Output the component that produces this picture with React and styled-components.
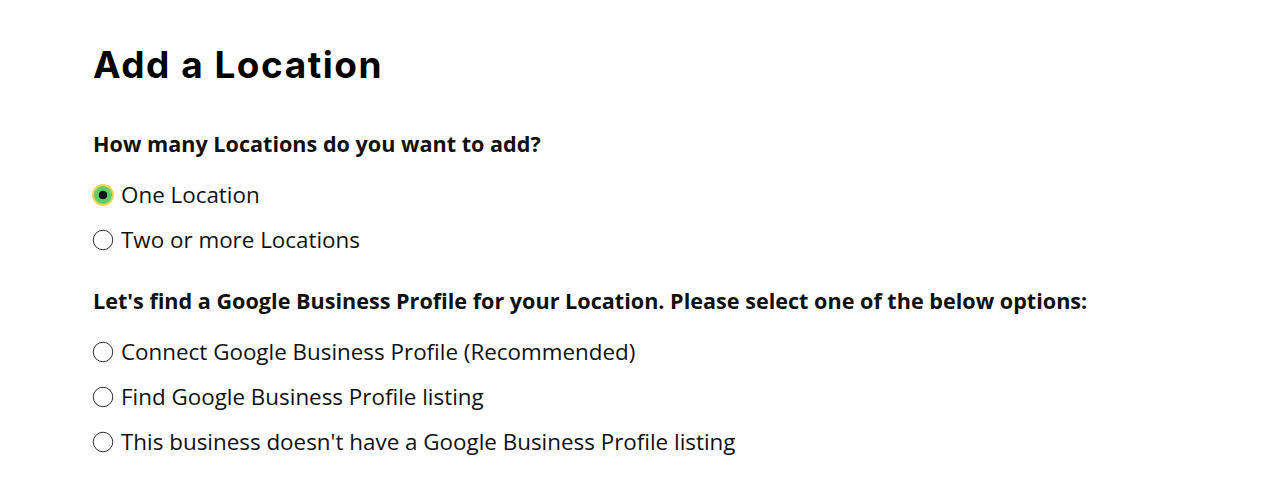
import React, { useState } from "react";
import styled, { createGlobalStyle } from "styled-components";

const GlobalStyle = createGlobalStyle`
  body {
    margin: 0;
    background: #fff;
    color: #111;
    font-family: "Open Sans", "Liberation Sans", sans-serif;
  }
`;

const Page = styled.div`
  padding: 40px 92px 0;
`;

const Title = styled.h1`
  font-family: "Inter", "Liberation Sans", sans-serif;
  font-weight: 700;
  font-size: 37px;
  letter-spacing: 1.5px;
  line-height: 50px;
  margin: 0 0 41px 1px;
  color: #000;
`;

const Group = styled.div`
  display: flex;
  flex-direction: column;
  margin-bottom: 26px;
`;

const Question = styled.div`
  font-size: 21.6px;
  font-weight: 700;
  line-height: 26px;
  margin: 0 0 15px 1px;
`;

const Option = styled.label`
  display: flex;
  align-items: center;
  gap: 7px;
  height: 45px;
  font-size: 22.4px;
  color: #111;
  cursor: pointer;
`;

const Radio = styled.span`
  box-sizing: border-box;
  width: 22px;
  height: 22px;
  border-radius: 50%;
  flex: none;
  border: ${(p) => (p.checked ? "2px solid #f2d45a" : "1px solid #222")};
  background: ${(p) =>
    p.checked
      ? "radial-gradient(circle, #111 0 4px, #5ccf68 4.6px)"
      : "#fff"};
  transform: ${(p) => (p.checked ? "none" : "scale(0.93)")};
`;

const countOptions = ["One Location", "Two or more Locations"];
const profileOptions = [
  "Connect Google Business Profile (Recommended)",
  "Find Google Business Profile listing",
  "This business doesn't have a Google Business Profile listing",
];

const RadioGroup = ({ question, options, value, onChange }) => (
  <Group>
    <Question>{question}</Question>
    {options.map((opt, i) => (
      <Option key={opt} onClick={() => onChange(i)}>
        <Radio checked={value === i} />
        {opt}
      </Option>
    ))}
  </Group>
);

const App = () => {
  const [count, setCount] = useState(0);
  const [profile, setProfile] = useState(null);

  return (
    <>
      <GlobalStyle />
      <Page>
        <Title>Add a Location</Title>
        <RadioGroup
          question="How many Locations do you want to add?"
          options={countOptions}
          value={count}
          onChange={setCount}
        />
        <RadioGroup
          question="Let's find a Google Business Profile for your Location. Please select one of the below options:"
          options={profileOptions}
          value={profile}
          onChange={setProfile}
        />
      </Page>
    </>
  );
};

export default App;
